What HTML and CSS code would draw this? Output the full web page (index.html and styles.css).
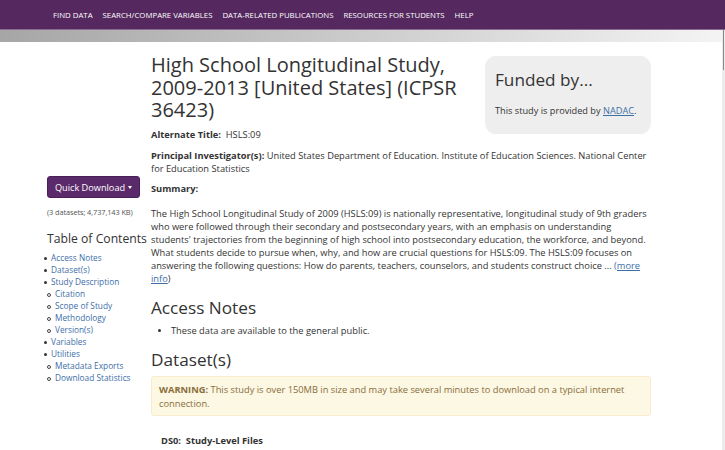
FILE: index.html
```html
<!DOCTYPE html>
<html>
<head>
<meta charset="utf-8">
<link rel="stylesheet" href="styles.css">
</head>
<body>
<div class="topnav">
  <a>FIND DATA</a><a>SEARCH/COMPARE VARIABLES</a><a>DATA-RELATED PUBLICATIONS</a><a>RESOURCES FOR STUDENTS</a><a>HELP</a>
</div>
<div class="graybar"></div>
<div class="scrollbar"><div class="thumb"></div></div>
<div class="page">
  <aside class="side">
    <div class="qd">Quick Download <span class="caret"></span></div>
    <div class="dsinfo">(3 datasets; 4,737,143 KB)</div>
    <h3 class="toc-title">Table of Contents</h3>
    <ul class="toc">
      <li><a>Access Notes</a></li>
      <li><a>Dataset(s)</a></li>
      <li><a>Study Description</a>
        <ul>
          <li><a>Citation</a></li>
          <li><a>Scope of Study</a></li>
          <li><a>Methodology</a></li>
          <li><a>Version(s)</a></li>
        </ul>
      </li>
      <li><a>Variables</a></li>
      <li><a>Utilities</a>
        <ul>
          <li><a>Metadata Exports</a></li>
          <li><a>Download Statistics</a></li>
        </ul>
      </li>
    </ul>
  </aside>
  <main class="main">
    <div class="funded">
      <h2>Funded by...</h2>
      <p>This study is provided by <a>NADAC</a>.</p>
    </div>
    <h1 class="title">High School Longitudinal Study, 2009-2013 [United States] (ICPSR 36423)</h1>
    <p class="meta alt"><b>Alternate Title:</b>&nbsp; HSLS:09</p>
    <p class="meta pi"><b>Principal Investigator(s):</b> United States Department of Education. Institute of Education Sciences. National Center for Education Statistics</p>
    <p class="meta summary"><b>Summary:</b></p>
    <p class="body">The High School Longitudinal Study of 2009 (HSLS:09) is nationally representative, longitudinal study of 9th graders who were followed through their secondary and postsecondary years, with an emphasis on understanding students' trajectories from the beginning of high school into postsecondary education, the workforce, and beyond. What students decide to pursue when, why, and how are crucial questions for HSLS:09. The HSLS:09 focuses on answering the following questions: How do parents, teachers, counselors, and students construct choice ... <a class="more">(more info</a>)</p>
    <h2 class="sec">Access Notes</h2>
    <ul class="notes"><li>These data are available to the general public.</li></ul>
    <h2 class="sec">Dataset(s)</h2>
    <div class="warn"><b>WARNING:</b> This study is over 150MB in size and may take several minutes to download on a typical internet connection.</div>
    <p class="ds"><b>DS0:&nbsp; Study-Level Files</b></p>
  </main>
</div>
</body>
</html>
```
FILE: styles.css
```css
html, body { margin: 0; padding: 0; }
body {
  font-family: "Open Sans", "Noto Sans", sans-serif;
  color: #333;
  background: #fff;
  width: 725px;
  height: 450px;
  overflow: hidden;
  position: relative;
}
.topnav {
  height: 30px;
  background: #55295f;
  border-bottom: 1px solid #8a6a92;
  display: flex;
  align-items: center;
  padding-left: 53px;
  gap: 10px;
  box-sizing: border-box;
}
.topnav a {
  color: #fff;
  font-size: 7.8px;
  letter-spacing: 0;
}
.graybar {
  height: 12px;
  background: linear-gradient(to right, #a6a6a6, #c4c4c4 40%, #f4f4f4 100%);
}
.scrollbar {
  position: absolute;
  right: 0;
  top: 30px;
  width: 3px;
  bottom: 0;
  background: #ececec;
}
.scrollbar .thumb {
  height: 40px;
  margin-left: 1px;
  width: 1px;
  background: #888;
}
.page {
  display: flex;
  padding-left: 47px;
}
.side {
  width: 104px;
  padding-top: 134px;
}
.qd {
  width: 93px;
  height: 22px;
  box-sizing: border-box;
  background: #5b2a6b;
  border: 1px solid #4a2058;
  border-radius: 3px;
  color: #fff;
  font-size: 9.2px;
  display: flex;
  align-items: center;
  justify-content: center;
  gap: 3px;
}
.caret {
  width: 0; height: 0;
  border-left: 2.5px solid transparent;
  border-right: 2.5px solid transparent;
  border-top: 3px solid #fff;
}
.dsinfo {
  font-size: 7.4px;
  color: #555;
  margin-top: 9px;
  line-height: 10px;
  letter-spacing: -0.1px;
}
.toc-title {
  font-weight: 400;
  font-size: 12.2px;
  margin: 14px 0 5px 0;
  line-height: 16px;
  color: #333;
}
.toc, .toc ul {
  margin: 0;
  padding: 0;
  list-style: none;
  font-size: 8.3px;
  line-height: 12px;
}
.toc a { color: #3d6ea8; }
.toc > li { position: relative; padding-left: 4px; }
.toc > li::before {
  content: "";
  position: absolute;
  left: -3px; top: 5px;
  width: 3px; height: 3px;
  border-radius: 50%;
  background: #333;
}
.toc ul { margin-left: -4px; }
.toc ul li { position: relative; padding-left: 8px; }
.toc ul li::before {
  content: "";
  position: absolute;
  left: 0; top: 4.5px;
  width: 2px; height: 2px;
  border-radius: 50%;
  border: 1px solid #444;
}
.main {
  width: 498px;
  font-size: 9.3px;
}
.funded {
  float: right;
  margin-top: 14px;
  margin-right: -2px;
  width: 166px;
  height: 78px;
  box-sizing: border-box;
  background: #eeeeee;
  border-radius: 11px;
  padding: 14px 10px;
}
.funded h2 {
  font-weight: 400;
  font-size: 17.2px;
  margin: 0;
  line-height: 20px;
  color: #333;
}
.funded p {
  margin: 15px 0 0 0;
  font-size: 9.2px;
  line-height: 12px;
}
.funded a { color: #3d6ea8; text-decoration: underline; }
.title {
  font-weight: 400;
  font-size: 20px;
  line-height: 22.5px;
  margin: 12px 0 0 0;
  width: 325px;
  color: #333;
}
.meta, .body, .ds {
  margin: 0;
  line-height: 13px;
  font-size: 9.3px;
}
.meta.alt { margin-top: 6px; }
.meta.pi { margin-top: 8px; }
.meta.summary { margin-top: 7px; }
.body { margin-top: 12px; }
.more { color: #3d6ea8; text-decoration: underline; }
.sec {
  font-weight: 400;
  font-size: 17.2px;
  line-height: 22px;
  margin: 12.5px 0 0 0;
  color: #333;
}
.notes {
  margin: 4.5px 0 0 0;
  padding-left: 20px;
  font-size: 9.3px;
  line-height: 13px;
}
.notes li::marker { font-size: 8.5px; }
.warn {
  margin-top: 5px;
  margin-right: -2px;
  background: #fcf8e3;
  border: 1px solid #faebcc;
  border-radius: 3px;
  color: #8a6d3b;
  font-size: 9.3px;
  line-height: 14px;
  padding: 6px 7px 4px 7px;
}
.ds {
  margin: 17.5px 0 0 10px;
}
```
